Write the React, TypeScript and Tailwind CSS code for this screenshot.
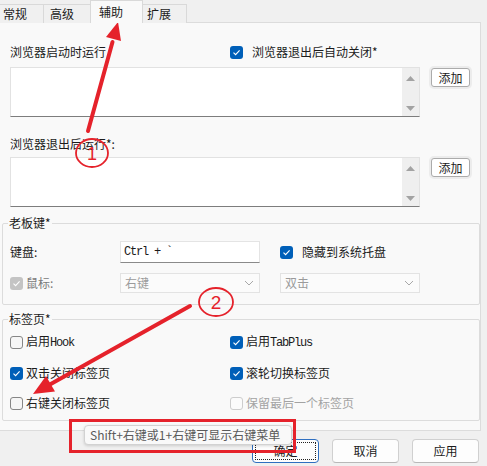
import React from "react";

function Check({ checked = false, disabled = false }: { checked?: boolean; disabled?: boolean }) {
  if (checked) {
    return (
      <span
        className={`w-[13px] h-[13px] rounded-[3px] flex items-center justify-center shrink-0 ${
          disabled ? "bg-[#c4c4c4]" : "bg-[#005fb8]"
        }`}
      >
        <svg width="9" height="7" viewBox="0 0 9 7">
          <path d="M1.5 3.6 L3.6 5.6 L7.6 1.4" stroke="white" strokeWidth="1.1" fill="none" />
        </svg>
      </span>
    );
  }
  return (
    <span
      className={`w-[13px] h-[13px] rounded-[3px] border shrink-0 ${
        disabled ? "border-[#cdcdcd] bg-[#fbfbfb]" : "border-[#868686] bg-[#f6f6f6]"
      }`}
    />
  );
}

function ListBox() {
  return (
    <div className="ml-[10px] w-[410px] h-[50px] flex bg-white border border-[#e2e2e2] border-b-[#7d7d7d]">
      <div className="flex-1" />
      <div className="w-[17px] bg-[#efefef] flex flex-col items-center justify-between pt-[8px] pb-[5px]">
        <svg width="9" height="5" viewBox="0 0 9 5">
          <path d="M0 5 L4.5 0 L9 5Z" fill="#a3a3a3" />
        </svg>
        <svg width="9" height="5" viewBox="0 0 9 5">
          <path d="M0 0 L4.5 5 L9 0Z" fill="#a3a3a3" />
        </svg>
      </div>
    </div>
  );
}

function AddButton() {
  return (
    <div className="ml-[11px] mt-[1px] w-[39px] h-[19px] rounded-[3px] border border-[#ababab] bg-white shadow-[0_0_0_2px_#ececec] flex items-center justify-center text-[#1b1b1b]">
      添加
    </div>
  );
}

function Combo({ text }: { text: string }) {
  return (
    <div className="w-[140px] h-[20px] border border-[#e3e3e3] bg-[#fbfbfb] flex items-center justify-between pl-[4px] pr-[5px] text-[#9b9b9b]">
      <span>{text}</span>
      <svg width="10" height="6" viewBox="0 0 10 6">
        <path d="M1 1 L5 5 L9 1" stroke="#a8a8a8" strokeWidth="1" fill="none" />
      </svg>
    </div>
  );
}

function Btn({ text, primary = false }: { text: string; primary?: boolean }) {
  return (
    <div
      className={`w-[67px] h-[24px] rounded-[4px] border bg-[#fdfdfd] flex items-center justify-center p-[2px] ${
        primary ? "border-[#2f6fc0]" : "border-[#d0d0d0] border-b-[#b8b8b8]"
      }`}
    >
      <div
        className={`w-full h-full flex items-center justify-center ${
          primary ? "border border-dotted border-[#222]" : ""
        }`}
      >
        {text}
      </div>
    </div>
  );
}

export default function App() {
  const red = "#e5222b";
  return (
    <div className="w-[487px] h-[466px] bg-[#f0f0f0] relative overflow-hidden text-[12px] leading-[16px] text-[#1b1b1b] font-['Noto_Sans_CJK_SC',sans-serif]">
      {/* tab bar */}
      <div className="flex items-end h-[23px]">
        <div className="w-[44px] h-[19px] border-t border-r border-[#d9d9d9] bg-[#f0f0f0] pl-[3px] pt-[1px]">常规</div>
        <div className="w-[47px] h-[19px] border-t border-r border-[#d9d9d9] bg-[#f0f0f0] pl-[6px] pt-[1px]">高级</div>
        <div className="relative z-10 -ml-px w-[53px] h-[23px] border-t border-l border-r border-[#d9d9d9] bg-[#f9f9f9] pl-[8px] pt-[3px]">
          辅助
        </div>
        <div className="w-[44px] h-[19px] border-t border-r border-[#d9d9d9] bg-[#f0f0f0] pl-[4px] pt-[1px]">扩展</div>
      </div>

      {/* panel */}
      <div className="-mt-px w-[481px] h-[409px] bg-[#f9f9f9] border-t border-r border-b border-[#dcdcdc] flex flex-col">
        <div className="mt-[21px] h-[16px] flex items-center">
          <div className="w-[230px] pl-[10px]">浏览器启动时运行</div>
          <Check checked />
          <span className="ml-[9px]">浏览器退出后自动关闭*</span>
        </div>
        <div className="mt-[7px] flex items-start">
          <ListBox />
          <AddButton />
        </div>
        <div className="mt-[19px] h-[16px] pl-[10px]">浏览器退出后运行*:</div>
        <div className="mt-[5px] flex items-start">
          <ListBox />
          <AddButton />
        </div>

        <fieldset className="mt-[8px] ml-[2px] w-[478px] border border-[#dcdcdc] rounded-[2px] pb-[11px]">
          <legend className="ml-[5px] px-[1px] leading-[16px]">老板键*</legend>
          <div className="mt-[10px] flex items-center h-[22px]">
            <div className="w-[117px] pl-[7px]">键盘:</div>
            <div className="w-[140px] h-[22px] bg-white border border-[#e4e4e4] border-b-[#8a8a8a] flex items-center pl-[3px] font-['Liberation_Mono',monospace] tracking-[-1.2px] text-[12px]">
              Ctrl + `
            </div>
            <div className="ml-[20px] flex items-center">
              <Check checked />
              <span className="ml-[9px]">隐藏到系统托盘</span>
            </div>
          </div>
          <div className="mt-[10px] flex items-center h-[20px]">
            <div className="w-[117px] pl-[7px] flex items-center">
              <Check checked disabled />
              <span className="ml-[3px] text-[#7a7a7a]">鼠标:</span>
            </div>
            <Combo text="右键" />
            <div className="ml-[20px]">
              <Combo text="双击" />
            </div>
          </div>
        </fieldset>

        <fieldset className="mt-[6px] ml-[2px] w-[478px] border border-[#dcdcdc] rounded-[2px] pb-[9px]">
          <legend className="ml-[5px] px-[1px] leading-[16px]">标签页*</legend>
          <div className="mt-[7px] h-[16px] flex items-center">
            <div className="w-[227px] pl-[7px] flex items-center">
              <Check />
              <span className="ml-[3px]">
                启用<span className="font-['Liberation_Mono',monospace] tracking-[-1.2px]">Hook</span>
              </span>
            </div>
            <Check checked />
            <span className="ml-[3px]">
              启用<span className="font-['Liberation_Mono',monospace] tracking-[-1.2px]">TabPlus</span>
            </span>
          </div>
          <div className="mt-[15px] h-[16px] flex items-center">
            <div className="w-[227px] pl-[7px] flex items-center">
              <Check checked />
              <span className="ml-[3px]">双击关闭标签页</span>
            </div>
            <Check checked />
            <span className="ml-[3px]">滚轮切换标签页</span>
          </div>
          <div className="mt-[14px] h-[16px] flex items-center">
            <div className="w-[227px] pl-[7px] flex items-center">
              <Check />
              <span className="ml-[3px]">右键关闭标签页</span>
            </div>
            <Check disabled />
            <span className="ml-[3px] text-[#a3a3a3]">保留最后一个标签页</span>
          </div>
        </fieldset>
      </div>

      {/* bottom buttons */}
      <div className="mt-[8px] flex justify-end pr-[8px] gap-[13px]">
        <Btn text="确定" primary />
        <Btn text="取消" />
        <Btn text="应用" />
      </div>

      {/* tooltip */}
      <div className="absolute left-[84px] top-[425px] w-[208px] h-[20px] bg-[#f9f9f9] border border-[#d2d2d2] rounded-[4px] shadow-[0_1px_3px_rgba(0,0,0,0.15)] pl-[5px] leading-[18px] text-[#5a5a5a] whitespace-nowrap">
        Shift+右键或1+右键可显示右键菜单
      </div>
      {/* red highlight box */}
      <div className="absolute left-[69px] top-[419px] w-[227px] h-[34px] border-[3px] border-[#e5222b]" />

      {/* annotations */}
      <svg className="absolute inset-0 pointer-events-none" width="487" height="466" viewBox="0 0 487 466">
        <line x1="88" y1="131" x2="112.5" y2="42" stroke={red} strokeWidth="4" strokeLinecap="round" />
        <polygon points="118,22 121,41 106,37" fill={red} />
        <ellipse cx="92" cy="153" rx="16" ry="14" fill="none" stroke={red} strokeWidth="1.8" />
        <text x="92" y="160" textAnchor="middle" fontSize="18" fill={red} fontFamily="Liberation Sans, sans-serif">
          1
        </text>
        <line x1="190" y1="306" x2="49" y2="385" stroke={red} strokeWidth="4" strokeLinecap="round" />
        <polygon points="33,394 55,391.5 46,376" fill={red} />
        <ellipse cx="216" cy="302" rx="17" ry="14" fill="none" stroke={red} strokeWidth="1.8" />
        <text x="216" y="309" textAnchor="middle" fontSize="19" fill={red} fontFamily="Liberation Sans, sans-serif">
          2
        </text>
      </svg>
    </div>
  );
}
